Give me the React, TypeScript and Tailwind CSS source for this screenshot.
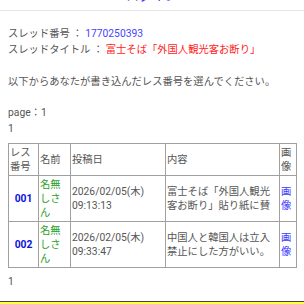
import React from "react";

const font = "font-['Roboto','Noto_Sans_CJK_JP',sans-serif]";

const rows = [
  {
    no: "001",
    date: "2026/02/05(木)",
    time: "09:13:13",
    body: ["富士そば「外国人観光", "客お断り」貼り紙に賛"],
  },
  {
    no: "002",
    date: "2026/02/05(木)",
    time: "09:33:47",
    body: ["中国人と韓国人は立入", "禁止にした方がいい。"],
  },
];

export default function App() {
  return (
    <div className={`w-[304px] h-[304px] overflow-hidden bg-white flex flex-col ${font} text-[10.3px] text-[#555]`}>
      {/* top bar, mostly scrolled off */}
      <div className="h-[11px] border-b border-[#e6e6e6] overflow-hidden flex justify-center">
        <span className="-mt-[11px] text-[13px] leading-[14px] text-[#3a3aff]">ログイン</span>
      </div>

      <div className="px-2 pt-[15px] leading-[16px]">
        <div>
          スレッド番号 ： <span className="text-[#4545ff]">1770250393</span>
        </div>
        <div>
          スレッドタイトル ： <span className="text-[#ff1a1a]">富士そば「外国人観光客お断り」</span>
        </div>
        <div className="mt-[16px]">以下からあなたが書き込んだレス番号を選んでください。</div>
        <div className="mt-[15px]">page：1</div>
        <div>1</div>

        <table className="mt-[6px] w-[288px] table-fixed border-collapse leading-[14px]">
          <colgroup>
            <col className="w-[30px]" />
            <col className="w-[32px]" />
            <col className="w-[95px]" />
            <col className="w-[114px]" />
            <col className="w-[17px]" />
          </colgroup>
          <thead>
            <tr className="h-[32px]">
              <th className="border border-[#a0a0a0] px-px text-left font-normal">レス<br />番号</th>
              <th className="border border-[#a0a0a0] px-px text-left font-normal">名前</th>
              <th className="border border-[#a0a0a0] px-px text-left font-normal">投稿日</th>
              <th className="border border-[#a0a0a0] px-px text-left font-normal">内容</th>
              <th className="border border-[#a0a0a0] px-px text-left font-normal">画<br />像</th>
            </tr>
          </thead>
          <tbody>
            {rows.map((r) => (
              <tr key={r.no} className="h-[46px]">
                <td className="border border-[#a0a0a0] text-center font-bold text-[#1010e0]">{r.no}</td>
                <td className="border border-[#a0a0a0] px-px text-[#28a028]">名無<br />しさ<br />ん</td>
                <td className="border border-[#a0a0a0] px-px">{r.date}<br />{r.time}</td>
                <td className="border border-[#a0a0a0] px-px">{r.body[0]}<br />{r.body[1]}</td>
                <td className="border border-[#a0a0a0] px-px text-[#3a3aff]">画<br />像</td>
              </tr>
            ))}
          </tbody>
        </table>

        <div className="mt-[6px]">1</div>
      </div>

      <div className="mt-auto h-[3px] border-t border-[#444] bg-[#ffff33]" />
    </div>
  );
}
